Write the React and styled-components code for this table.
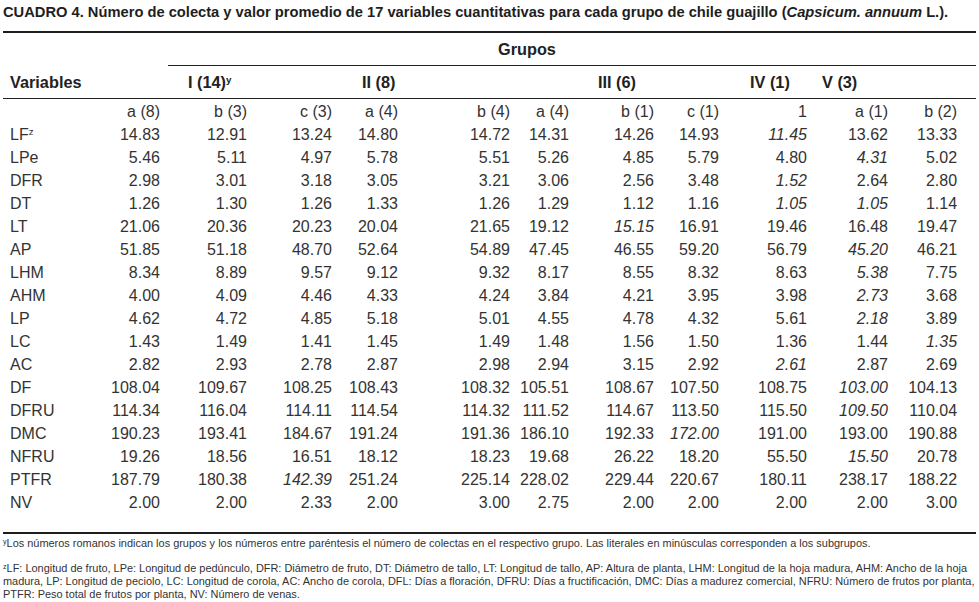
import React from 'react'
import styled, { createGlobalStyle } from 'styled-components'

const GlobalStyle = createGlobalStyle`
  body {
    margin: 0;
    background: #fff;
    font-family: "Liberation Sans", Arial, sans-serif;
    color: #333;
  }
`

// group label indents are measured from the left edge of each spanned cell
const groups = [
  { label: 'I (14)', sup: 'y', span: 3, indent: 78 },
  { label: 'II (8)', span: 2, indent: 30 },
  { label: 'III (6)', span: 3, indent: 88 },
  { label: 'IV (1)', span: 1, indent: 31 },
  { label: 'V (3)', span: 2, indent: 15 },
]

const subgroups = ['a (8)', 'b (3)', 'c (3)', 'a (4)', 'b (4)', 'a (4)', 'b (1)', 'c (1)', '1', 'a (1)', 'b (2)']

// "*" marks a value set in italics
const rows = [
  ['LF', 'z', '14.83 12.91 13.24 14.80 14.72 14.31 14.26 14.93 *11.45 13.62 13.33'],
  ['LPe', '', '5.46 5.11 4.97 5.78 5.51 5.26 4.85 5.79 4.80 *4.31 5.02'],
  ['DFR', '', '2.98 3.01 3.18 3.05 3.21 3.06 2.56 3.48 *1.52 2.64 2.80'],
  ['DT', '', '1.26 1.30 1.26 1.33 1.26 1.29 1.12 1.16 *1.05 *1.05 1.14'],
  ['LT', '', '21.06 20.36 20.23 20.04 21.65 19.12 *15.15 16.91 19.46 16.48 19.47'],
  ['AP', '', '51.85 51.18 48.70 52.64 54.89 47.45 46.55 59.20 56.79 *45.20 46.21'],
  ['LHM', '', '8.34 8.89 9.57 9.12 9.32 8.17 8.55 8.32 8.63 *5.38 7.75'],
  ['AHM', '', '4.00 4.09 4.46 4.33 4.24 3.84 4.21 3.95 3.98 *2.73 3.68'],
  ['LP', '', '4.62 4.72 4.85 5.18 5.01 4.55 4.78 4.32 5.61 *2.18 3.89'],
  ['LC', '', '1.43 1.49 1.41 1.45 1.49 1.48 1.56 1.50 1.36 1.44 *1.35'],
  ['AC', '', '2.82 2.93 2.78 2.87 2.98 2.94 3.15 2.92 *2.61 2.87 2.69'],
  ['DF', '', '108.04 109.67 108.25 108.43 108.32 105.51 108.67 107.50 108.75 *103.00 104.13'],
  ['DFRU', '', '114.34 116.04 114.11 114.54 114.32 111.52 114.67 113.50 115.50 *109.50 110.04'],
  ['DMC', '', '190.23 193.41 184.67 191.24 191.36 186.10 192.33 *172.00 191.00 193.00 190.88'],
  ['NFRU', '', '19.26 18.56 16.51 18.12 18.23 19.68 26.22 18.20 55.50 *15.50 20.78'],
  ['PTFR', '', '187.79 180.38 *142.39 251.24 225.14 228.02 229.44 220.67 180.11 238.17 188.22'],
  ['NV', '', '2.00 2.00 2.33 2.00 3.00 2.75 2.00 2.00 2.00 2.00 3.00'],
]

const colWidths = [107, 50, 87, 85, 66, 112, 59, 85, 65, 88, 81, 88]

const App = () => (
  <>
    <GlobalStyle />
    <Page>
      <Caption>
        CUADRO 4. Número de colecta y valor promedio de 17 variables cuantitativas para cada grupo de chile guajillo (<i>Capsicum. annuum</i> L.).
      </Caption>
      <ThickRule />
      <Table>
        <colgroup>
          {colWidths.map((w, i) => <col key={i} style={{ width: w }} />)}
        </colgroup>
        <thead>
          <tr>
            <th />
            <GruposCell colSpan={11}>
              <GruposLabel>Grupos</GruposLabel>
              <SpanRule />
            </GruposCell>
          </tr>
          <tr>
            <VarHead>Variables</VarHead>
            {groups.map(g => (
              <GroupHead key={g.label} colSpan={g.span} $indent={g.indent}>
                {g.label}{g.sup && <Sup>{g.sup}</Sup>}
              </GroupHead>
            ))}
          </tr>
        </thead>
        <tbody>
          <SubRow>
            <td />
            {subgroups.map((s, i) => <Num key={i}>{s}</Num>)}
          </SubRow>
          {rows.map(([name, sup, vals]) => (
            <DataRow key={name}>
              <Name>{name}{sup && <Sup>{sup}</Sup>}</Name>
              {vals.split(' ').map((v, i) => (
                <Num key={i} $italic={v.startsWith('*')}>{v.replace('*', '')}</Num>
              ))}
            </DataRow>
          ))}
        </tbody>
      </Table>
      <BottomRule />
      <Note>
        <NoteSup>y</NoteSup>Los números romanos indican los grupos y los números entre paréntesis el número de colectas en el respectivo grupo. Las literales en minúsculas corresponden a los subgrupos.
      </Note>
      <Note $gap={12}>
        <NoteSup>z</NoteSup>LF: Longitud de fruto, LPe: Longitud de pedúnculo, DFR: Diámetro de fruto, DT: Diámetro de tallo, LT: Longitud de tallo, AP: Altura de planta, LHM: Longitud de la hoja madura, AHM: Ancho de la hoja madura, LP: Longitud de peciolo, LC: Longitud de corola, AC: Ancho de corola, DFL: Días a floración, DFRU: Días a fructificación, DMC: Días a madurez comercial, NFRU: Número de frutos por planta, PTFR: Peso total de frutos por planta, NV: Número de venas.
      </Note>
    </Page>
  </>
)

export default App

const Page = styled.div`
  width: 973px;
  padding: 0 3px;
`

const Caption = styled.h1`
  margin: 0;
  padding-top: 4px;
  font-size: 14.7px;
  line-height: 16px;
  font-weight: bold;
  color: #1e1e1e;
  white-space: nowrap;
`

const ThickRule = styled.div`
  height: 2px;
  margin-top: 11px;
  background: #1e1e1e;
`

const BottomRule = styled(ThickRule)`
  margin-top: 18px;
`

const Table = styled.table`
  width: 973px;
  border-collapse: collapse;
  table-layout: fixed;
  font-size: 16px;
`

const GruposCell = styled.th`
  padding: 0;
  text-align: left;
`

const GruposLabel = styled.div`
  padding-left: 388px;
  line-height: 32px;
  font-size: 16.3px;
  color: #222;
`

const SpanRule = styled.div`
  margin-left: 58px;
  height: 1px;
  background: #222;
`

const VarHead = styled.th`
  padding: 0 0 0 7px;
  text-align: left;
  line-height: 32px;
  font-size: 16.3px;
  color: #222;
  border-bottom: 1px solid #222;
`

const GroupHead = styled.th`
  padding: 0 0 0 ${p => p.$indent}px;
  text-align: left;
  line-height: 32px;
  font-size: 16.3px;
  color: #222;
  border-bottom: 1px solid #222;
  white-space: nowrap;
`

const Sup = styled.sup`
  font-size: 0.6em;
  line-height: 0;
  vertical-align: 0.55em;
`

const NoteSup = styled(Sup)`
  font-size: 0.65em;
  vertical-align: 0.45em;
`

const SubRow = styled.tr`
  td {
    padding-top: 2px;
    line-height: 22px;
  }
`

const DataRow = styled.tr`
  td {
    line-height: 23px;
  }
`

const Name = styled.td`
  padding: 0 0 0 7px;
  white-space: nowrap;
`

const Num = styled.td`
  padding: 0;
  text-align: right;
  white-space: nowrap;
  font-style: ${p => (p.$italic ? 'italic' : 'normal')};

  &:last-child {
    padding-right: 19px;
  }
`

const Note = styled.p`
  margin: ${p => p.$gap || 3}px 0 0;
  font-size: 10.95px;
  line-height: 13px;
  color: #333;
`
